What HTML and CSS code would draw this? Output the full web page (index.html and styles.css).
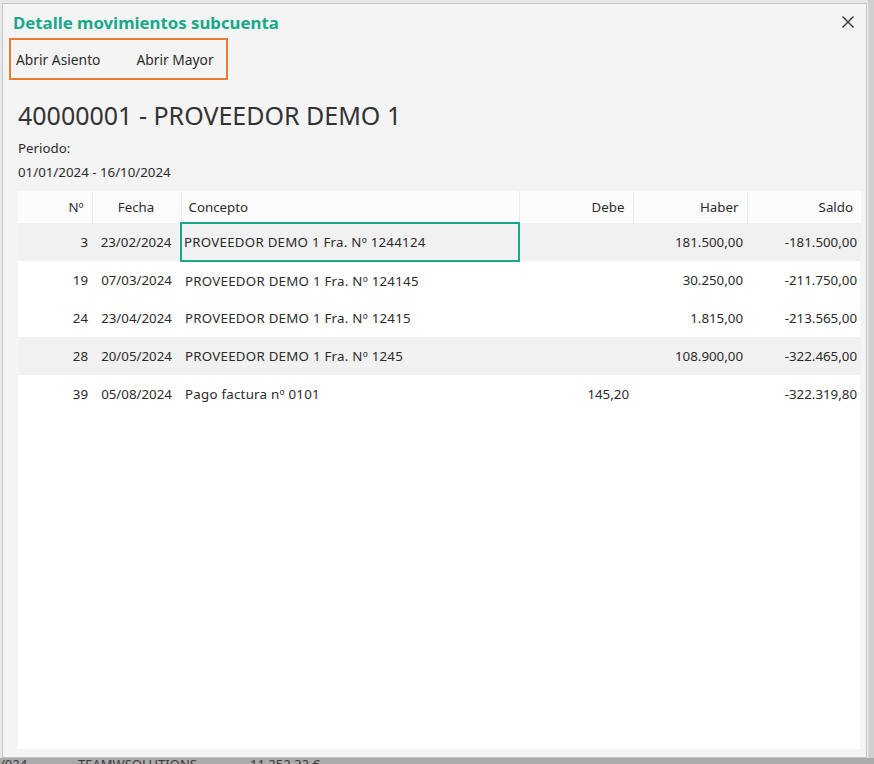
FILE: index.html
```html
<!DOCTYPE html>
<html lang="es">
<head>
<meta charset="UTF-8">
<meta name="viewport" content="width=device-width, initial-scale=1.0">
<title>Detalle movimientos subcuenta</title>
<link rel="stylesheet" href="styles.css">
</head>

<body>
<div class="screen">
  <section class="dialog">
    <header class="dialog-header">
      <h1 class="dialog-title">Detalle movimientos subcuenta</h1>
      <button class="close-btn" aria-label="Cerrar">
        <svg width="14" height="14" viewBox="0 0 14 14">
          <path d="M1.5 1.5 L12.5 12.5 M12.5 1.5 L1.5 12.5" stroke="#333" stroke-width="1.4" fill="none"/>
        </svg>
      </button>
    </header>

    <nav class="toolbar">
      <button class="tool-btn">Abrir Asiento</button>
      <button class="tool-btn">Abrir Mayor</button>
    </nav>

    <h2 class="account-name">40000001 - PROVEEDOR DEMO 1</h2>
    <div class="period-label">Periodo:</div>
    <div class="period-value">01/01/2024 - 16/10/2024</div>

    <div class="grid-container">
      <table class="moves-table">
        <colgroup>
          <col class="col-num">
          <col class="col-date">
          <col class="col-concept">
          <col class="col-money">
          <col class="col-money">
          <col class="col-money">
        </colgroup>
        <thead>
          <tr>
            <th class="num">Nº</th>
            <th class="center">Fecha</th>
            <th>Concepto</th>
            <th class="num">Debe</th>
            <th class="num">Haber</th>
            <th class="num">Saldo</th>
          </tr>
        </thead>
        <tbody>
          <tr class="band">
            <td class="num">3</td>
            <td class="center">23/02/2024</td>
            <td class="concept selected">PROVEEDOR DEMO 1 Fra. Nº 1244124</td>
            <td class="num"></td>
            <td class="num">181.500,00</td>
            <td class="num">-181.500,00</td>
          </tr>
          <tr>
            <td class="num">19</td>
            <td class="center">07/03/2024</td>
            <td class="concept">PROVEEDOR DEMO 1 Fra. Nº 124145</td>
            <td class="num"></td>
            <td class="num">30.250,00</td>
            <td class="num">-211.750,00</td>
          </tr>
          <tr>
            <td class="num">24</td>
            <td class="center">23/04/2024</td>
            <td class="concept">PROVEEDOR DEMO 1 Fra. Nº 12415</td>
            <td class="num"></td>
            <td class="num">1.815,00</td>
            <td class="num">-213.565,00</td>
          </tr>
          <tr class="band">
            <td class="num">28</td>
            <td class="center">20/05/2024</td>
            <td class="concept">PROVEEDOR DEMO 1 Fra. Nº 1245</td>
            <td class="num"></td>
            <td class="num">108.900,00</td>
            <td class="num">-322.465,00</td>
          </tr>
          <tr>
            <td class="num">39</td>
            <td class="center">05/08/2024</td>
            <td class="concept">Pago factura nº 0101</td>
            <td class="num">145,20</td>
            <td class="num"></td>
            <td class="num">-322.319,80</td>
          </tr>
        </tbody>
      </table>
    </div>
  </section>

  <!-- app window behind the dialog, only its top edge shows -->
  <div class="behind-row">
    <span class="behind-date">/024</span>
    <span class="behind-name">TEAMWSOLUTIONS</span>
    <span class="behind-amount">11.252,32 €</span>
  </div>
</div>
</body>
</html>
```

FILE: styles.css
```css
/* Detalle movimientos subcuenta - modal */
body {
  margin: 0;
  font-family: 'Noto Sans', 'Open Sans', 'Segoe UI', sans-serif;
  background: #e4e4e4;
  color: #2b2b2b;
}

.screen {
  width: 874px;
  height: 764px;
  overflow: hidden;
  background: linear-gradient(to right, #e8e8e8 0, #e8e8e8 868px, #cfcfcf 868px);
}

.dialog {
  box-sizing: border-box;
  width: 865px;
  height: 755px;
  margin: 3px 0 0 2px;
  border: 1px solid #c4c4c4;
  background: #f4f4f4;
  padding: 0 6px 8px 15px;
  display: flex;
  flex-direction: column;
  box-shadow: 1px 1px 0 #ececec, 2px 2px 0 #d8d8d8;
}

.dialog-header {
  display: flex;
  align-items: center;
  justify-content: space-between;
  height: 34px;
  margin-left: -5px;
  padding-right: 2px;
}

.dialog-title {
  margin: 2px 0 0 0;
  font-size: 16.8px;
  font-weight: 700;
  color: #1aa88a;
}

.close-btn {
  background: none;
  border: none;
  padding: 0;
  width: 20px;
  height: 20px;
  margin-top: 2px;
  display: flex;
  align-items: center;
  justify-content: center;
  cursor: pointer;
}

.toolbar {
  align-self: flex-start;
  display: flex;
  align-items: center;
  height: 42px;
  box-sizing: border-box;
  margin-left: -9px;
  padding: 1px 12px 0 5px;
  border: 2px solid #ea7d36;
  gap: 36px;
}

.tool-btn {
  background: none;
  border: none;
  padding: 0;
  font-family: inherit;
  font-size: 13.8px;
  color: #2b2b2b;
  cursor: pointer;
}

.account-name {
  margin: 18px 0 0 0;
  font-size: 25px;
  font-weight: 400;
  line-height: 34px;
  color: #333333;
}

.period-label,
.period-value {
  font-size: 13.3px;
  line-height: 24px;
}

.period-label {
  margin-top: 4px;
}

.grid-container {
  flex: 1;
  margin-top: 7px;
  background: #ffffff;
}

.moves-table {
  width: 842px;
  table-layout: fixed;
  border-collapse: collapse;
  font-size: 13.3px;
}

.col-num { width: 74px; }
.col-date { width: 89px; }
.col-concept { width: 338px; }
.col-money { width: 114px; }

.moves-table th {
  height: 31px;
  padding: 0 8px 0 7px;
  font-weight: 400;
  line-height: 18px;
  text-align: left;
  background: #fcfcfc;
  border-left: 1px solid #ececec;
}

.moves-table th:first-child {
  border-left: none;
}

.moves-table td {
  height: 38px;
  padding: 0 4px 0 4px;
  line-height: 18px;
  white-space: nowrap;
  box-sizing: border-box;
}

.moves-table .num { text-align: right; }
.moves-table .center { text-align: center; }

.moves-table td.concept {
  letter-spacing: 0.25px;
}

.moves-table tr.band td {
  background: #f1f1f1;
}

.moves-table td.selected {
  border: 2px solid #1aa88a;
  padding-left: 2px;
}

.behind-row {
  height: 6px;
  overflow: hidden;
  background: #ababab;
  display: flex;
  font-size: 13px;
  line-height: 12px;
  color: #3a3a3a;
}

.behind-date { width: 78px; }
.behind-name { width: 172px; }
.behind-amount { width: 120px; }
```
